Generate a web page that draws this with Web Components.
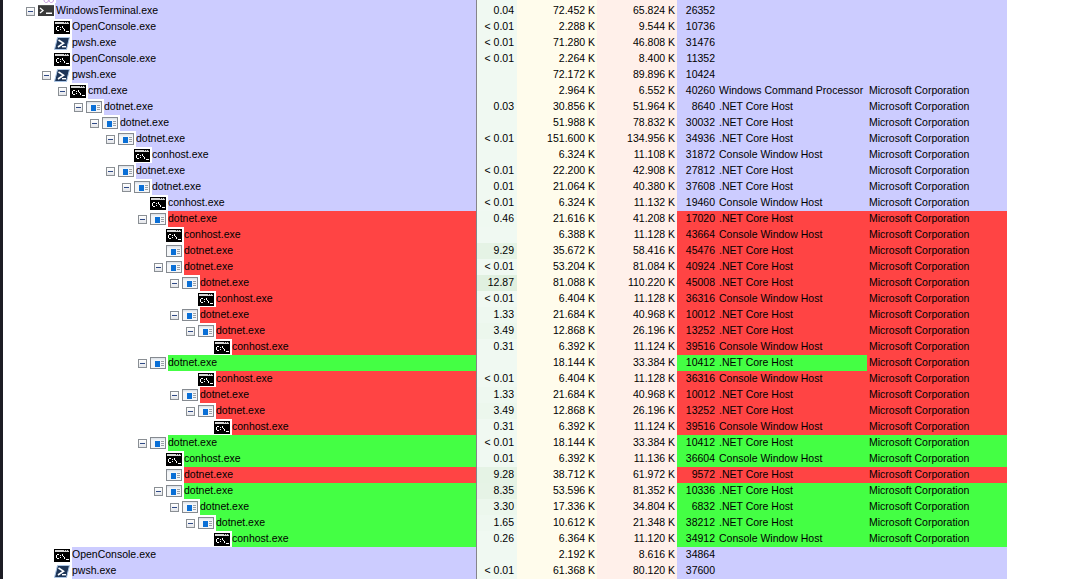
<!DOCTYPE html>
<html>
<head>
<meta charset="utf-8">
<title>Process tree</title>
<style>
  html, body { margin: 0; height: 100%; background: #fff; overflow: hidden; }
</style>
</head>
<body>
<process-tree></process-tree>
<script>
const ICONS = {
  terminal: `<rect x="0" y="0" width="16" height="11" fill="#3a3a3a"/>
    <rect x="0" y="0" width="16" height="1" fill="#555"/>
    <path d="M2 3l3 2.5-3 2.5" fill="none" stroke="#fff" stroke-width="1.3"/>
    <rect x="8" y="7.5" width="6" height="1.5" fill="#fff"/>`,
  console: `<g shape-rendering="crispEdges">
    <rect x="0" y="0" width="16" height="13" fill="#000"/>
    <rect x="1" y="1" width="14" height="2" fill="#d6d6d6"/>
    <rect x="10" y="1" width="1" height="1" fill="#333"/>
    <rect x="12" y="1" width="1" height="1" fill="#333"/>
    <rect x="14" y="1" width="1" height="1" fill="#333"/>
    <path fill="#fff" d="M3 5h2v1H3zM2 6h1v3H2zM3 9h2v1H3zM6 6h1v1H6zM6 8h1v1H6zM8 5h1v2H8zM9 7h1v1H9zM10 8h1v2h-1zM12 10h3v1h-3z"/>
  </g>`,
  pwsh: `<path d="M3.5 0.5H15.5L12.5 12.5H0.5Z" fill="#1d3557" stroke="#a9c4e4" stroke-width="1"/>
    <path d="M4.5 3l5 3.2L4 10" fill="none" stroke="#fff" stroke-width="1.6"/>
    <rect x="8" y="9" width="4" height="1.4" fill="#fff"/>`,
  dotnet: `<rect x="0.5" y="0.5" width="15" height="11" fill="#f4f6f8" stroke="#858a90"/>
    <rect x="1" y="1" width="14" height="1.5" fill="#dfe4ea"/>
    <rect x="5" y="4" width="5" height="6" fill="#0a6fd6"/>
    <path d="M11 4.5h3M11 6.5h3M11 8.5h3" stroke="#9aa0a6" stroke-width="1"/>`,
  clipped: `<path d="M1 0c0 3.4 4.5 3.4 4.5 0M6 0c0 3.4 4.5 3.4 4.5 0" fill="none" stroke="#c49bdc" stroke-width="1"/>`
};

class ProcIcon extends HTMLElement {
  constructor() {
    super();
    this.attachShadow({ mode: "open" });
  }
  connectedCallback() {
    const type = this.getAttribute("type");
    this.shadowRoot.innerHTML = `
      <style>
        :host { display: block; width: 16px; height: 16px; }
        svg { display: block; }
      </style>
      <svg width="16" height="16" viewBox="0 0 16 16">${ICONS[type]}</svg>`;
  }
}
customElements.define("proc-icon", ProcIcon);

class TreeExpander extends HTMLElement {
  constructor() {
    super();
    this.attachShadow({ mode: "open" });
    this.shadowRoot.innerHTML = `
      <style>
        :host {
          display: flex;
          align-items: center;
          justify-content: center;
          box-sizing: border-box;
          width: 9px;
          height: 9px;
          border: 1px solid #8a8f94;
          background: linear-gradient(#fff, #e4e6ea);
        }
        i { display: block; width: 5px; height: 1px; background: #2f4a86; }
      </style>
      <i></i>`;
  }
}
customElements.define("tree-expander", TreeExpander);

class ProcessRow extends HTMLElement {
  constructor() {
    super();
    this.attachShadow({ mode: "open" });
  }
  connectedCallback() {
    const a = (n) => this.getAttribute(n) || "";
    const depth = Number(a("depth"));
    const cpu = a("cpu");
    const load = parseFloat(cpu.replace("<", "")) || 0;
    const heat = Math.min(load / 13, 1);
    const mix = (from, to) => Math.round(from + (to - from) * heat);
    const cpuBg = `rgb(${mix(240, 224)},${mix(249, 240)},${mix(242, 224)})`;
    const mark = a("mark") || "#ccf";
    const companyMark = a("company-mark") || mark;
    // the root row's label colour starts a pixel before its text
    const trim = depth === 0 ? 1 : 0;

    this.shadowRoot.innerHTML = `
      <style>
        :host {
          display: flex;
          height: 16px;
          width: 1004px;
          line-height: 14px;
          white-space: nowrap;
        }
        .tree { display: flex; flex: none; width: 473px; background: ${mark}; }
        .gutter {
          display: flex;
          flex: none;
          box-sizing: border-box;
          width: ${53 + depth * 16 - trim}px;
          padding-left: ${23 + depth * 16}px;
          background: #fff;
        }
        .exp { flex: none; width: 12px; padding-top: 4px; box-sizing: border-box; height: 16px; }
        .ico { flex: none; padding-top: 2px; }
        .label { flex: 1; padding-left: ${trim}px; }
        .sep { flex: none; width: 1px; background: #85858a; }
        .num { flex: none; box-sizing: border-box; text-align: right; }
        .cpu { width: 40px; padding-right: 3px; background: ${cpuBg}; }
        .priv { width: 80px; padding-right: 2px; background: #fffcec; }
        .ws { width: 80px; padding-right: 2px; background: #fff0ea; }
        .pid { width: 40px; padding-right: 2px; background: ${mark}; }
        .desc { flex: none; box-sizing: border-box; width: 150px; padding-left: 2px; background: ${mark}; }
        .company { flex: none; box-sizing: border-box; width: 140px; padding-left: 2px; background: ${companyMark}; }
      </style>
      <div class="tree">
        <div class="gutter">
          <div class="exp">${a("open") ? "<tree-expander></tree-expander>" : ""}</div>
          <div class="ico"><proc-icon type="${a("icon")}"></proc-icon></div>
        </div>
        <div class="label">${a("name")}</div>
      </div>
      <div class="sep"></div>
      <div class="num cpu">${cpu.replace("<", "&lt;")}</div>
      <div class="num priv">${a("priv")} K</div>
      <div class="num ws">${a("ws")} K</div>
      <div class="num pid">${a("pid")}</div>
      <div class="desc">${a("desc")}</div>
      <div class="company">${a("company")}</div>`;
  }
}
customElements.define("process-row", ProcessRow);

const R = "#ff4444", G = "#44ff44";
const NET = ".NET Core Host", CON = "Console Window Host", CMD = "Windows Command Processor";
// depth, open, name, cpu, private, working set, pid, description, mark
const ROWS = [
  [0, 1, "WindowsTerminal.exe", "0.04", "72.452", "65.824", "26352", "", ""],
  [1, 0, "OpenConsole.exe", "< 0.01", "2.288", "9.544", "10736", "", ""],
  [1, 0, "pwsh.exe", "< 0.01", "71.280", "46.808", "31476", "", ""],
  [1, 0, "OpenConsole.exe", "< 0.01", "2.264", "8.400", "11352", "", ""],
  [1, 1, "pwsh.exe", "", "72.172", "89.896", "10424", "", ""],
  [2, 1, "cmd.exe", "", "2.964", "6.552", "40260", CMD, ""],
  [3, 1, "dotnet.exe", "0.03", "30.856", "51.964", "8640", NET, ""],
  [4, 1, "dotnet.exe", "", "51.988", "78.832", "30032", NET, ""],
  [5, 1, "dotnet.exe", "< 0.01", "151.600", "134.956", "34936", NET, ""],
  [6, 0, "conhost.exe", "", "6.324", "11.108", "31872", CON, ""],
  [5, 1, "dotnet.exe", "< 0.01", "22.200", "42.908", "27812", NET, ""],
  [6, 1, "dotnet.exe", "0.01", "21.064", "40.380", "37608", NET, ""],
  [7, 0, "conhost.exe", "< 0.01", "6.324", "11.132", "19460", CON, ""],
  [7, 1, "dotnet.exe", "0.46", "21.616", "41.208", "17020", NET, R],
  [8, 0, "conhost.exe", "", "6.388", "11.128", "43664", CON, R],
  [8, 0, "dotnet.exe", "9.29", "35.672", "58.416", "45476", NET, R],
  [8, 1, "dotnet.exe", "< 0.01", "53.204", "81.084", "40924", NET, R],
  [9, 1, "dotnet.exe", "12.87", "81.088", "110.220", "45008", NET, R],
  [10, 0, "conhost.exe", "< 0.01", "6.404", "11.128", "36316", CON, R],
  [9, 1, "dotnet.exe", "1.33", "21.684", "40.968", "10012", NET, R],
  [10, 1, "dotnet.exe", "3.49", "12.868", "26.196", "13252", NET, R],
  [11, 0, "conhost.exe", "0.31", "6.392", "11.124", "39516", CON, R],
  [7, 1, "dotnet.exe", "", "18.144", "33.384", "10412", NET, G, R],
  [10, 0, "conhost.exe", "< 0.01", "6.404", "11.128", "36316", CON, R],
  [9, 1, "dotnet.exe", "1.33", "21.684", "40.968", "10012", NET, R],
  [10, 1, "dotnet.exe", "3.49", "12.868", "26.196", "13252", NET, R],
  [11, 0, "conhost.exe", "0.31", "6.392", "11.124", "39516", CON, R],
  [7, 1, "dotnet.exe", "< 0.01", "18.144", "33.384", "10412", NET, G],
  [8, 0, "conhost.exe", "0.01", "6.392", "11.136", "36604", CON, G],
  [8, 0, "dotnet.exe", "9.28", "38.712", "61.972", "9572", NET, R],
  [8, 1, "dotnet.exe", "8.35", "53.596", "81.352", "10336", NET, G],
  [9, 1, "dotnet.exe", "3.30", "17.336", "34.804", "6832", NET, G],
  [10, 1, "dotnet.exe", "1.65", "10.612", "21.348", "38212", NET, G],
  [11, 0, "conhost.exe", "0.26", "6.364", "11.120", "34912", CON, G],
  [1, 0, "OpenConsole.exe", "", "2.192", "8.616", "34864", "", ""],
  [1, 0, "pwsh.exe", "< 0.01", "61.368", "80.120", "37600", "", ""]
];

function iconFor(name) {
  if (name.startsWith("Windows")) return "terminal";
  if (name.startsWith("pwsh")) return "pwsh";
  if (name.startsWith("dotnet")) return "dotnet";
  return "console";
}

class ProcessTree extends HTMLElement {
  constructor() {
    super();
    this.attachShadow({ mode: "open" });
    const rows = ROWS.map((r) => {
      const mark = r[8];
      const attrs = [
        `depth="${r[0]}"`, r[1] ? `open="1"` : "", `name="${r[2]}"`, `icon="${iconFor(r[2])}"`,
        `cpu="${r[3].replace("<", "&lt;")}"`, `priv="${r[4]}"`, `ws="${r[5]}"`, `pid="${r[6]}"`,
        `desc="${r[7]}"`, r[7] ? `company="Microsoft Corporation"` : "",
        mark ? `mark="${mark}"` : "", r[9] ? `company-mark="${r[9]}"` : ""
      ];
      return `<process-row ${attrs.join(" ")}></process-row>`;
    }).join("");
    this.shadowRoot.innerHTML = `
      <style>
        :host {
          display: flex;
          width: 1066px;
          height: 579px;
          overflow: hidden;
          font: 10.5px "Liberation Sans", sans-serif;
          color: #000;
        }
        .edge { flex: none; width: 3px; background: #1c1c24; }
        .list { flex: none; }
        .top { display: flex; height: 3px; width: 1004px; overflow: hidden; }
        .top .a { flex: none; width: 53px; background: #fff; padding-left: 40px; box-sizing: border-box; }
        .top .b { flex: none; width: 420px; background: #ccf; }
        .top .s { flex: none; width: 1px; background: #85858a; }
        .top .c { flex: none; width: 40px; background: #f0f9f2; }
        .top .d { flex: none; width: 80px; background: #fffcec; }
        .top .e { flex: none; width: 80px; background: #fff0ea; }
        .top .f { flex: none; width: 330px; background: #ccf; }
      </style>
      <div class="edge"></div>
      <div class="list">
        <div class="top">
          <div class="a"><proc-icon type="clipped"></proc-icon></div>
          <div class="b"></div><div class="s"></div><div class="c"></div>
          <div class="d"></div><div class="e"></div><div class="f"></div>
        </div>
        ${rows}
      </div>`;
  }
}
customElements.define("process-tree", ProcessTree);
</script>
</body>
</html>
